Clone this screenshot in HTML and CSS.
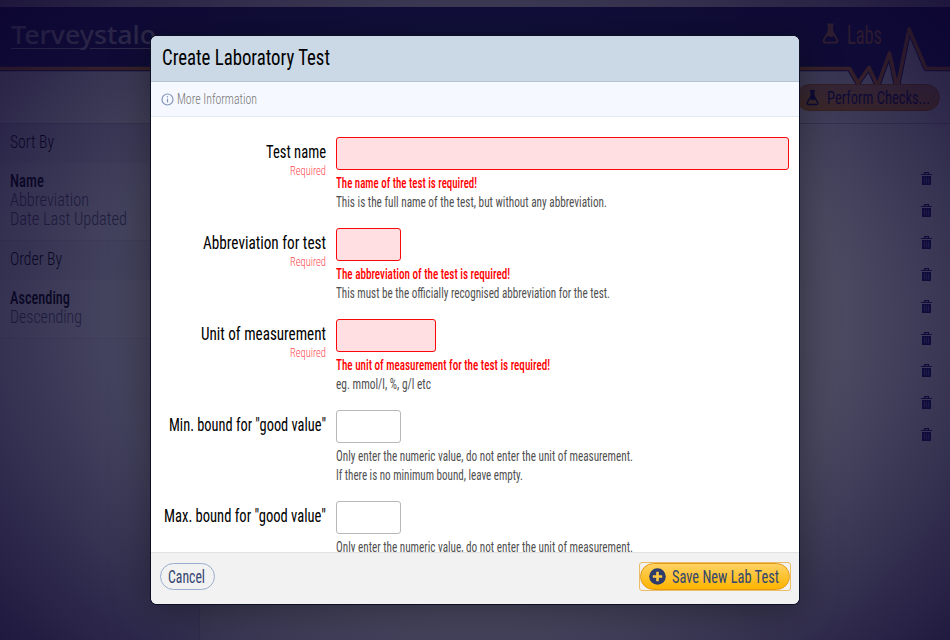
FILE: index.html
```
<!DOCTYPE html>
<html lang="en">
<head>
<meta charset="utf-8">
<title>Create Laboratory Test</title>
<link rel="stylesheet" href="styles.css">
</head>
<body>
<svg class="symbols" aria-hidden="true">
  <symbol id="flask" viewBox="0 0 18 22">
    <path d="M5.500 1.500H12.500M7.200 2V8.500L2 17.500Q.8 20.500 4 20.700H14Q17.200 20.500 16 17.500L10.800 8.500V2" fill="none" stroke="currentColor" stroke-width="2"/>
    <path d="M7.300 2H10.700V9L13 13Q10.500 16 7 13.700L5 13.500 7.300 9Z" fill="currentColor"/>
  </symbol>
  <symbol id="trash" viewBox="0 0 11 13">
    <path d="M3.500 2V.6H7.500V2M0 2.500H11" fill="none" stroke="currentColor" stroke-width="1.200"/>
    <path d="M1 4H10V13H1Z" fill="currentColor"/>
    <path d="M3.500 5.500V11.500M5.500 5.500V11.500M7.500 5.500V11.500" fill="none" stroke="#8c8cc0" stroke-width=".7"/>
  </symbol>
</svg>
<div class="page">
  <header class="header">
    <svg class="pulse" viewBox="0 0 950 90">
      <path class="pulse-fill" d="M0 0H950V68.500H926L909 29L897 88L889.500 53L877.500 86L869 67.500L858 83L849.500 68.500H0Z"/>
      <path class="pulse-edge" d="M0 68.500H849.500L858 83L869 67.500L877.500 86L889.500 53L897 88L909 29L926 68.500H950"/>
      <path class="pulse-line" d="M0 68.500H849.500L858 83L869 67.500L877.500 86L889.500 53L897 88L909 29L926 68.500H950"/>
    </svg>
    <div class="logo"><span class="fit" data-w="145">Terveystalo</span><i class="rule"></i></div>
    <div class="section"><svg class="flask"><use href="#flask"/></svg><span class="fit" data-w="35">Labs</span></div>
  </header>
  <div class="toolbar"><div class="checks"><svg class="flask"><use href="#flask"/></svg><span class="fit" data-w="103">Perform Checks...</span></div></div>
  <div class="columns">
    <aside class="sidebar">
      <h3><span class="fit" data-w="44">Sort By</span></h3>
      <ul>
        <li class="active"><span class="fit" data-w="34">Name</span></li>
        <li><span class="fit" data-w="79">Abbreviation</span></li>
        <li><span class="fit" data-w="117">Date Last Updated</span></li>
      </ul>
      <h3><span class="fit" data-w="52">Order By</span></h3>
      <ul class="last">
        <li class="active"><span class="fit" data-w="60">Ascending</span></li>
        <li><span class="fit" data-w="72">Descending</span></li>
      </ul>
    </aside>
    <div class="rows">
      <svg><use href="#trash"/></svg><svg><use href="#trash"/></svg><svg><use href="#trash"/></svg>
      <svg><use href="#trash"/></svg><svg><use href="#trash"/></svg><svg><use href="#trash"/></svg>
      <svg><use href="#trash"/></svg><svg><use href="#trash"/></svg><svg><use href="#trash"/></svg>
    </div>
  </div>
</div>
<div class="overlay">
  <section class="modal">
    <h1><span class="fit" data-w="168">Create Laboratory Test</span></h1>
    <div class="info">
      <svg viewBox="0 0 13 13"><circle cx="6.500" cy="6.500" r="5.500"/><path d="M6.500 3.300V4.500M6.500 5.700V9.500"/></svg>
      <span class="fit" data-w="80">More Information</span>
    </div>
    <div class="form">
      <div class="field">
        <div class="label"><div><span class="fit" data-w="60">Test name</span></div><small><span class="fit" data-w="36">Required</span></small></div>
        <div class="control"><div class="input wide invalid"></div>
          <p class="error"><span class="fit" data-w="141">The name of the test is required!</span></p>
          <p><span class="fit" data-w="271">This is the full name of the test, but without any abbreviation.</span></p></div>
      </div>
      <div class="field">
        <div class="label"><div><span class="fit" data-w="123">Abbreviation for test</span></div><small><span class="fit" data-w="36">Required</span></small></div>
        <div class="control"><div class="input invalid"></div>
          <p class="error"><span class="fit" data-w="174">The abbreviation of the test is required!</span></p>
          <p><span class="fit" data-w="274">This must be the officially recognised abbreviation for the test.</span></p></div>
      </div>
      <div class="field">
        <div class="label"><div><span class="fit" data-w="125">Unit of measurement</span></div><small><span class="fit" data-w="36">Required</span></small></div>
        <div class="control"><div class="input medium invalid"></div>
          <p class="error"><span class="fit" data-w="214">The unit of measurement for the test is required!</span></p>
          <p><span class="fit" data-w="95">eg. mmol/l, %, g/l etc</span></p></div>
      </div>
      <div class="field">
        <div class="label"><div><span class="fit" data-w="157">Min. bound for "good value"</span></div></div>
        <div class="control"><div class="input"></div>
          <p><span class="fit" data-w="297">Only enter the numeric value, do not enter the unit of measurement.</span></p>
          <p><span class="fit" data-w="187">If there is no minimum bound, leave empty.</span></p></div>
      </div>
      <div class="field">
        <div class="label"><div><span class="fit" data-w="162">Max. bound for "good value"</span></div></div>
        <div class="control"><div class="input"></div>
          <p><span class="fit" data-w="297">Only enter the numeric value, do not enter the unit of measurement.</span></p></div>
      </div>
    </div>
    <footer>
      <div class="button"><span class="fit" data-w="37">Cancel</span></div>
      <div class="focus"><div class="button primary">
        <svg viewBox="0 0 17 17"><circle cx="8.500" cy="8.500" r="8.300"/><path d="M8.500 3.800V13.200M3.800 8.500H13.200"/></svg>
        <span class="fit" data-w="107">Save New Lab Test</span></div></div>
    </footer>
  </section>
</div>
<script src="fit.js"></script>
</body>
</html>
```
FILE: styles.css
```
* { box-sizing: border-box; }
body { margin: 0; width: 950px; height: 640px; overflow: hidden; position: relative; font-family: Roboto, "Liberation Sans", sans-serif; font-stretch: 75%; color: #000; }
h1, h3, p, ul { margin: 0; padding: 0; list-style: none; font-weight: 400; }
.symbols { position: absolute; width: 0; height: 0; }
.fit { display: inline-block; white-space: nowrap; transform-origin: left; }

.page { width: 950px; height: 640px; background: #fff; display: flex; flex-direction: column; border-top: 7px solid #d8d0d4; }
.header { height: 59px; flex: none; display: flex; justify-content: space-between; position: relative; }
.pulse { position: absolute; left: 0; top: 0; width: 950px; height: 90px; margin-top: -7px; clip-path: inset(7px 0 0 0); }
.pulse-fill { fill: #1c1a66; }
.pulse-edge { fill: none; stroke: #1c1a66; stroke-width: 5.500; stroke-linejoin: round; }
.pulse-line { fill: none; stroke: #f08c18; stroke-width: 3.600; stroke-linejoin: round; }
.logo { position: relative; margin: 9px 0 0 11px; font: 500 26px/36px "Noto Sans", sans-serif; color: #ccc4d4; }
.rule { display: block; width: 145px; height: 1px; margin-top: -4px; background: linear-gradient(90deg, #ccc4d4 70px, transparent 70px 79px, #ccc4d4 79px); }
.section { position: relative; display: flex; align-items: flex-start; margin: 16px 68px 0 0; font-size: 25px; line-height: 24px; color: #e08c40; }
.section .fit { margin-top: 1px; }
.section .flask { width: 17px; height: 21px; margin-right: 8px; }
.toolbar { height: 58px; flex: none; padding: 18px 10px 0 0; display: flex; justify-content: flex-end; border-bottom: 1px solid #c4c0d4; }
.checks { position: relative; width: 144px; height: 27px; border: 1px solid #d87800; border-radius: 14px; background: linear-gradient(#e0a060, #f09818); display: flex; align-items: center; padding-left: 9px; font-size: 19px; color: #10105c; }
.checks .flask { width: 13px; height: 17px; margin-right: 8px; }
.columns { flex: 1; display: flex; justify-content: space-between; }
.sidebar { width: 200px; background: #e6e6f4; border-right: 1px solid #d4d2e0; }
.sidebar h3 { height: 39px; padding: 8px 10px; font-size: 19px; line-height: 19px; background: #dfdfec; font-weight: 350; }
.sidebar ul { height: 78px; padding: 8px 10px; background: #e9e9f4; border-bottom: 1px solid #d4d2e2; }
.sidebar ul.last { height: 59px; }
.sidebar li { height: 19px; font-size: 19px; line-height: 19px; font-weight: 300; color: #5b5676; }
.sidebar li.active { color: #000; font-weight: 500; }
.rows { padding: 48px 18px 0 0; display: flex; flex-direction: column; gap: 19px; }
.rows svg { width: 11px; height: 13px; color: #1c1c78; }

.overlay { position: absolute; inset: 0; display: flex; justify-content: center; padding-top: 36px; background: radial-gradient(ellipse 640px 500px at 50% 50%, rgba(18,18,38,.66) 0%, rgba(13,12,44,.75) 58%, rgba(12,4,46,.92) 100%); }
.modal { width: 648px; height: 568px; border-radius: 6px; overflow: hidden; background: #fff; display: flex; flex-direction: column; box-shadow: 0 0 0 1px #0c1026, 0 5px 40px rgba(0,0,0,.42); }
.modal h1 { height: 46px; flex: none; background: #cbd8e5; border-bottom: 1px solid #b5c4d4; padding: 8px 11px; font-size: 22.500px; line-height: 26px; }
.info { height: 35px; flex: none; display: flex; align-items: center; gap: 3px; padding-left: 10px; background: #f5f8fe; border-bottom: 1px solid #e1e8f0; font-size: 15px; font-weight: 300; color: #777; }
.info svg { width: 13px; height: 13px; fill: none; stroke: #8393b8; stroke-width: 1.2; }
.form { flex: 1; overflow: hidden; padding: 20px 10px 0; }
.field { height: 91px; display: flex; gap: 10px; }
.label { width: 165px; text-align: right; font-size: 18.500px; line-height: 20px; padding-top: 5px; }
.label small { display: block; font-size: 13px; line-height: 17px; color: #ff4a4f; font-weight: 300; }
.control { flex: 1; }
.input { width: 65px; height: 33px; border: 1px solid #b8b8b8; border-radius: 3px; margin-bottom: 4px; }
.input.medium { width: 100px; }
.input.wide { width: 453px; }
.input.invalid { border-color: #f80808; background: #ffdfe1; }
.control p { height: 19px; font-size: 14.500px; line-height: 19px; color: #505050; }
.control p.error { color: #ff0000; font-weight: 500; }
footer { height: 52px; flex: none; background: #f2f2f2; border-top: 1px solid #e2e2e2; display: flex; justify-content: space-between; padding: 10px 8px 0 9px; }
.button { height: 27px; border: 1px solid #9aadce; border-radius: 14px; display: flex; align-items: center; padding: 0 9px 0 7px; font-size: 18.500px; color: #32466f; }
.focus { width: 152px; height: 29px; border: 1.500px solid #eabd66; border-radius: 3px; margin-top: -1px; }
.primary { width: 150px; height: 27px; border: 1px solid #e19a15; background: linear-gradient(#ffd264, #ffb400); padding: 0 8px; gap: 6px; }
.primary svg { width: 17px; height: 17px; flex: none; fill: #2d3c6a; }
.primary path { stroke: #ffc840; stroke-width: 2.600; }
```
FILE: fit.js
```
// Condense each run of text to its set width.
document.querySelectorAll('.fit').forEach(function (el) {
  var natural = el.getBoundingClientRect().width;
  var width = Number(el.dataset.w);
  el.style.transform = 'scaleX(' + width / natural + ')';
  el.style.marginRight = (width - natural) + 'px';
});
```
